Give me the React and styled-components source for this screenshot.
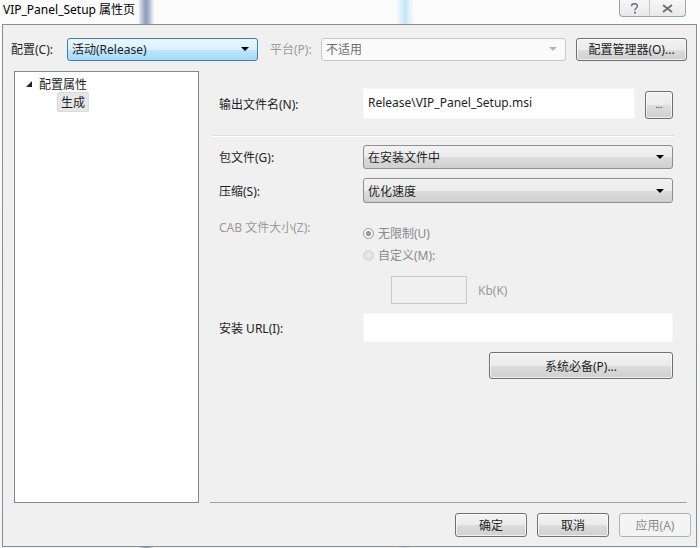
import React from 'react'
import styled, { createGlobalStyle, css } from 'styled-components'

const GlobalStyle = createGlobalStyle`
  html, body {
    margin: 0;
    padding: 0;
    background: #ffffff;
  }
  body {
    font-family: "Noto Sans", "Noto Sans CJK SC", sans-serif;
    font-size: 12px;
    color: #1e1e1e;
  }
`

const Window = styled.div`
  width: 700px;
  height: 548px;
  display: flex;
  flex-direction: column;
  overflow: hidden;
  background:
    linear-gradient(90deg, transparent 138px, #b7c3d6 142px, #8a9cba 146px, #b7c3d6 150px, transparent 154px),
    linear-gradient(90deg, transparent 396px, #d8eef9 402px, #c2e4f5 405px, #d8eef9 408px, transparent 414px),
    linear-gradient(180deg, #fbfbfb, #f3f4f5);
`

const TitleBar = styled.div`
  height: 24px;
  flex: none;
  display: flex;
  align-items: flex-start;
  padding: 0 14px 0 3px;
`

const Caption = styled.div`
  line-height: 20px;
  font-size: 12px;
  color: #000;
`

const CaptionButtons = styled.div`
  margin-left: auto;
  display: flex;
  height: 16px;
  border: 1px solid #9aa3ad;
  border-top: none;
  border-radius: 0 0 4px 4px;
  background: linear-gradient(180deg, #f6f6f6, #e9e9ea);
  overflow: hidden;
`

const CaptionButton = styled.div`
  width: ${p => p.$w}px;
  display: flex;
  align-items: center;
  justify-content: center;
  color: #6a6f76;
  & + & {
    border-left: 1px solid #c2c7cc;
  }
`

const Body = styled.div`
  flex: 1;
  margin: 0 3px 2px 2px;
  border: 1px solid #8c8c8c;
  background: #f0f0f0;
  display: flex;
  flex-direction: column;
  padding: 12px 9px 0 8px;
`

const BottomEdge = styled.div`
  height: 2px;
  flex: none;
  background: linear-gradient(90deg, #d3d9e2 0, #d3d9e2 140px, #6f93c2 145px, #27497a 180px, #1f3b66 100%);
`

const TopRow = styled.div`
  height: 24px;
  display: flex;
  align-items: center;
`

const Label = styled.span`
  color: ${p => (p.$disabled ? '#9a9a9a' : '#1e1e1e')};
  white-space: nowrap;
`

const Combo = styled.div`
  position: relative;
  height: ${p => p.$h || 23}px;
  width: ${p => (p.$w ? `${p.$w}px` : 'auto')};
  flex: ${p => (p.$w ? 'none' : '1')};
  box-sizing: border-box;
  border-radius: 3px;
  display: flex;
  align-items: center;
  padding: 0 22px 0 4px;
  ${p =>
    p.$hot
      ? css`
          border: 1px solid #3c7fb1;
          background: linear-gradient(180deg, #eaf6fd 0%, #d9f0fc 50%, #bee6fd 51%, #a7d9f5 100%);
        `
      : p.$disabled
        ? css`
            border: 1px solid #c4c8cc;
            background: #fafafa;
            color: #6d6d6d;
          `
        : css`
            border: 1px solid #8e8f8f;
            background: linear-gradient(180deg, #f2f2f2 0%, #ebebeb 50%, #dddddd 51%, #cfcfcf 100%);
          `}
  &::after {
    content: '';
    position: absolute;
    right: 8px;
    top: 50%;
    margin-top: -2px;
    border-left: 4px solid transparent;
    border-right: 4px solid transparent;
    border-top: 4px solid ${p => (p.$disabled ? '#b5b5b5' : '#000')};
  }
`

const Button = styled.div`
  box-sizing: border-box;
  width: ${p => p.$w}px;
  height: ${p => p.$h || 24}px;
  flex: none;
  display: flex;
  align-items: center;
  justify-content: center;
  padding: 0 6px;
  border-radius: 3px;
  border: 1px solid ${p => (p.$disabled ? '#adb2b5' : '#707070')};
  color: ${p => (p.$disabled ? '#8a8a8a' : '#1e1e1e')};
  background: ${p =>
    p.$disabled
      ? '#f4f4f4'
      : 'linear-gradient(180deg, #f2f2f2 0%, #ebebeb 50%, #dddddd 51%, #cfcfcf 100%)'};
  box-shadow: inset 0 0 0 1px ${p => (p.$disabled ? 'transparent' : 'rgba(255,255,255,0.7)')};
`

const Main = styled.div`
  flex: 1;
  display: flex;
  margin-top: 10px;
  min-height: 0;
`

const Tree = styled.div`
  width: 185px;
  height: 432px;
  flex: none;
  margin-left: 3px;
  box-sizing: border-box;
  border: 1px solid #828790;
  background: #fff;
  padding: 4px 0 0 10px;
`

const TreeItem = styled.div`
  display: flex;
  align-items: center;
  height: 16px;
  padding-left: ${p => p.$indent || 0}px;
  margin-top: ${p => p.$top || 0}px;
`

const Expander = styled.svg`
  width: 8px;
  height: 8px;
  margin-right: 6px;
`

const Selected = styled.span`
  display: inline-flex;
  align-items: center;
  height: 18px;
  padding: 0 3px;
  border-radius: 2px;
  background: #e6e6e6;
  border: 1px solid #dadada;
`

const Panel = styled.div`
  flex: 1;
  margin-left: 11px;
  height: 432px;
  box-sizing: border-box;
  border-bottom: 1px solid #a0a0a0;
  padding: 17px 14px 0 9px;
  display: flex;
  flex-direction: column;
`

const Row = styled.div`
  display: flex;
  align-items: ${p => p.$align || 'center'};
  margin-top: ${p => p.$top || 0}px;
  height: ${p => (p.$h ? `${p.$h}px` : 'auto')};
`

const LabelCell = styled.div`
  width: 144px;
  flex: none;
  display: flex;
  align-items: center;
  height: 100%;
`

const Field = styled.div`
  flex: 1;
  display: flex;
  align-items: center;
  justify-content: ${p => p.$justify || 'flex-start'};
  gap: ${p => p.$gap || 0}px;
  padding-left: ${p => p.$indent || 0}px;
`

const TextBox = styled.div`
  box-sizing: border-box;
  height: ${p => p.$h}px;
  width: ${p => (p.$w ? `${p.$w}px` : 'auto')};
  flex: ${p => (p.$w ? 'none' : '1')};
  background: ${p => (p.$disabled ? '#f0f0f0' : '#fff')};
  border: 1px solid ${p => (p.$disabled ? '#c9c9c9' : '#f7f7f7')};
  padding: 5px 4px 0;
`

const Separator = styled.div`
  height: 1px;
  margin: 16px -1px 0 -7px;
  background: #dcdcdc;
  border-bottom: 1px solid #ffffff;
`

const Radio = styled.span`
  display: inline-flex;
  align-items: center;
  gap: 4px;
  color: #8a8a8a;
  margin-top: ${p => p.$top || 0}px;
`

const RadioDot = styled.span`
  width: 9px;
  height: 9px;
  border-radius: 50%;
  border: 1px solid ${p => (p.$checked ? '#9a9a9a' : '#d4d4d4')};
  background: ${p =>
    p.$checked
      ? 'radial-gradient(circle, #9a9a9a 0 2.2px, #f4f4f4 2.8px)'
      : 'radial-gradient(circle, #eaeaea, #dcdcdc)'};
`

const Footer = styled.div`
  height: 43px;
  flex: none;
  display: flex;
  justify-content: flex-end;
  align-items: flex-start;
  gap: 10px;
  padding-top: 10px;
  box-sizing: border-box;
  margin-right: -4px;
`

const Ellipsis = styled(Button)`
  margin-top: 2px;
  font-size: 9px;
`

export default function App() {
  return (
    <Window>
      <GlobalStyle />
      <TitleBar>
        <Caption>VIP_Panel_Setup 属性页</Caption>
        <CaptionButtons>
          <CaptionButton $w={29}>
            <svg width="9" height="11" viewBox="0 0 9 11">
              <path d="M1.5 3.2 C1.5 1.4 3 0.8 4.5 0.8 C6.2 0.8 7.4 1.8 7.4 3.2 C7.4 4.8 5 5.2 5 7 L5 7.6" fill="none" stroke="currentColor" strokeWidth="1.4" />
              <rect x="4.1" y="8.8" width="1.8" height="1.8" fill="currentColor" />
            </svg>
          </CaptionButton>
          <CaptionButton $w={35}>
            <svg width="11" height="9" viewBox="0 0 11 9">
              <path d="M1 1 L10 8 M10 1 L1 8" stroke="currentColor" strokeWidth="1.8" fill="none" />
            </svg>
          </CaptionButton>
        </CaptionButtons>
      </TitleBar>

      <Body>
        <TopRow>
          <Label style={{ width: 57 }}>配置(C):</Label>
          <Combo $hot $w={191}>活动(Release)</Combo>
          <Label $disabled style={{ marginLeft: 12, width: 52 }}>平台(P):</Label>
          <Combo $disabled $w={245}>不适用</Combo>
          <Button $w={111} $h={23} style={{ marginLeft: 10 }}>配置管理器(O)...</Button>
        </TopRow>

        <Main>
          <Tree>
            <TreeItem>
              <Expander viewBox="0 0 8 8">
                <polygon points="7,1 7,7 1,7" fill="#262626" />
              </Expander>
              配置属性
            </TreeItem>
            <TreeItem $indent={32} $top={2}>
              <Selected>生成</Selected>
            </TreeItem>
          </Tree>

          <Panel>
            <Row $h={31} $align="flex-start">
              <LabelCell>输出文件名(N):</LabelCell>
              <Field $gap={10}>
                <TextBox $h={31}>Release\VIP_Panel_Setup.msi</TextBox>
                <Ellipsis $w={28} $h={28}>...</Ellipsis>
              </Field>
            </Row>

            <Separator />

            <Row $top={8} $h={24}>
              <LabelCell>包文件(G):</LabelCell>
              <Field>
                <Combo $h={24}>在安装文件中</Combo>
              </Field>
            </Row>

            <Row $top={9} $h={25}>
              <LabelCell>压缩(S):</LabelCell>
              <Field>
                <Combo $h={25}>优化速度</Combo>
              </Field>
            </Row>

            <Row $top={15} $h={18} $align="flex-start">
              <LabelCell>
                <Label $disabled>CAB 文件大小(Z):</Label>
              </LabelCell>
              <Field>
                <Radio $top={6}>
                  <RadioDot $checked />
                  无限制(U)
                </Radio>
              </Field>
            </Row>

            <Row $top={10} $h={18}>
              <LabelCell />
              <Field>
                <Radio>
                  <RadioDot />
                  自定义(M):
                </Radio>
              </Field>
            </Row>

            <Row $top={12} $h={28}>
              <LabelCell />
              <Field $gap={11} $indent={28}>
                <TextBox $h={28} $w={76} $disabled />
                <Label $disabled>Kb(K)</Label>
              </Field>
            </Row>

            <Row $top={9} $h={29}>
              <LabelCell>安装 URL(I):</LabelCell>
              <Field>
                <TextBox $h={29} />
              </Field>
            </Row>

            <Row $top={10} $h={27}>
              <LabelCell />
              <Field $justify="flex-end">
                <Button $w={184} $h={27}>系统必备(P)...</Button>
              </Field>
            </Row>
          </Panel>
        </Main>

        <Footer>
          <Button $w={72}>确定</Button>
          <Button $w={72}>取消</Button>
          <Button $w={72} $disabled>应用(A)</Button>
        </Footer>
      </Body>
      <BottomEdge />
    </Window>
  )
}
